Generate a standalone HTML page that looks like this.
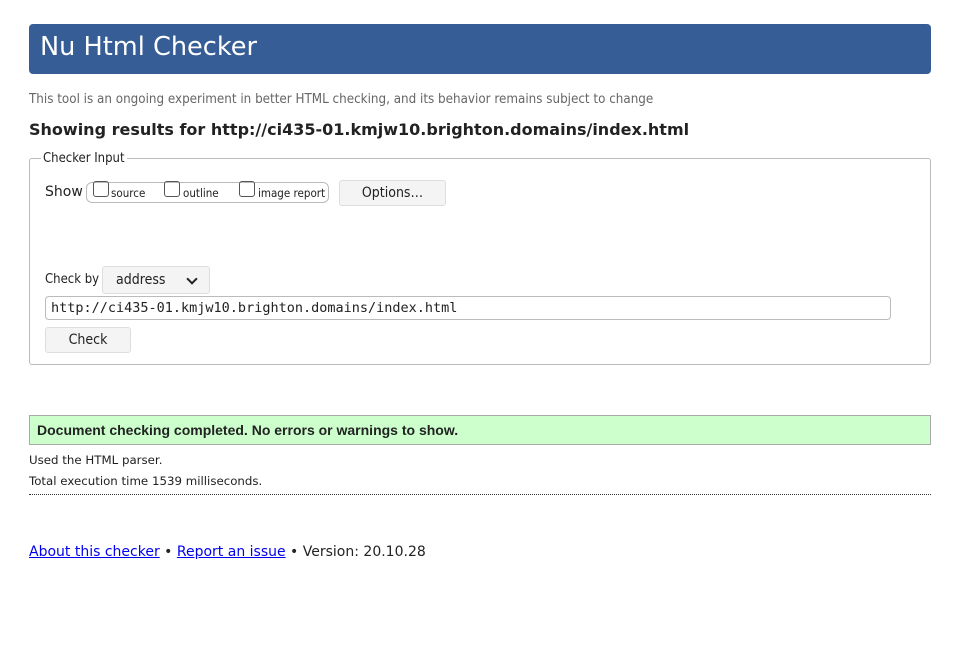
<!DOCTYPE html>
<html><head><style>
body{margin:0;background:#fff;font-family:"DejaVu Sans",sans-serif;color:#222;}
.c{position:absolute;}
h1{position:absolute;left:29px;top:24px;width:902px;height:50px;margin:0;background:#365d95;border-radius:4px;color:#fff;font-weight:normal;font-size:25.6px;line-height:47px;box-sizing:border-box;padding-left:11px;}
.cond{font-family:"DejaVu Sans Condensed","Liberation Sans Narrow","Liberation Sans",sans-serif;font-stretch:condensed;}
.btn{position:absolute;background:#f4f4f4;border:1px solid #ddd;border-radius:3px;box-sizing:border-box;text-align:center;font-size:13px;color:#222;}
a{color:#00e;}
</style></head><body>
<h1>Nu Html Checker</h1>
<div class="c cond" style="left:29px;top:92px;font-size:13.3px;color:#666;">This tool is an ongoing experiment in better HTML checking, and its behavior remains subject to change</div>
<div class="c" style="left:29px;top:120px;font-size:16px;font-weight:bold;">Showing results for http://ci435-01.kmjw10.brighton.domains/index.html</div>
<div class="c" style="left:29px;top:158px;width:902px;height:207px;border:1px solid #bbb;border-radius:3px;box-sizing:border-box;"></div>
<div class="c cond" style="left:41px;top:151px;background:#fff;padding:0 2px;font-size:13px;">Checker Input</div>
<div class="c" style="left:45px;top:184px;font-size:14px;">Show</div>
<div class="c cond" style="left:86px;top:182px;width:243px;height:21px;border:1px solid #bbb;border-radius:6px;box-sizing:border-box;font-size:11.5px;">
<span class="c" style="left:6px;top:-2px;width:14px;height:14px;border:1px solid #555;border-radius:3px;"></span><span class="c" style="left:24px;top:3px">source</span>
<span class="c" style="left:77px;top:-2px;width:14px;height:14px;border:1px solid #555;border-radius:3px;"></span><span class="c" style="left:96px;top:3px">outline</span>
<span class="c" style="left:152px;top:-2px;width:14px;height:14px;border:1px solid #555;border-radius:3px;"></span><span class="c" style="left:171px;top:3px">image report</span>
</div>
<div class="btn cond" style="left:339px;top:180px;width:107px;height:26px;line-height:24px;font-size:14px;">Options…</div>
<div class="c cond" style="left:45px;top:272px;font-size:13px;">Check by</div>
<div class="btn cond" style="left:102px;top:266px;width:108px;height:28px;line-height:26px;text-align:left;padding-left:13px;font-size:14px;">address<span class="c" style="left:85px;top:8px;width:6px;height:6px;border-right:2px solid #222;border-bottom:2px solid #222;transform:rotate(45deg);"></span></div>
<div class="c" style="left:45px;top:296px;width:846px;height:24px;border:1px solid #bbb;border-radius:4px;box-sizing:border-box;font-family:'DejaVu Sans Mono',monospace;font-size:13.5px;line-height:23px;padding-left:5px;">http://ci435-01.kmjw10.brighton.domains/index.html</div>
<div class="btn cond" style="left:45px;top:327px;width:86px;height:26px;line-height:25px;font-size:14px;">Check</div>
<div class="c" style="left:29px;top:415px;width:902px;height:30px;background:#ccffcc;border:1px solid #aaa;box-sizing:border-box;font-family:'Liberation Sans',sans-serif;font-weight:bold;font-size:14px;line-height:29px;padding-left:7px;">Document checking completed. No errors or warnings to show.</div>
<div class="c" style="left:29px;top:453px;font-size:11.8px;">Used the HTML parser.</div>
<div class="c" style="left:29px;top:474px;font-size:11.8px;">Total execution time 1539 milliseconds.</div>
<div class="c" style="left:29px;top:494px;width:902px;border-top:1px dotted #333;"></div>
<div class="c" style="left:29px;top:544px;font-size:14px;"><a href="#">About this checker</a> • <a href="#">Report an issue</a> • Version: 20.10.28</div>
</body></html>
